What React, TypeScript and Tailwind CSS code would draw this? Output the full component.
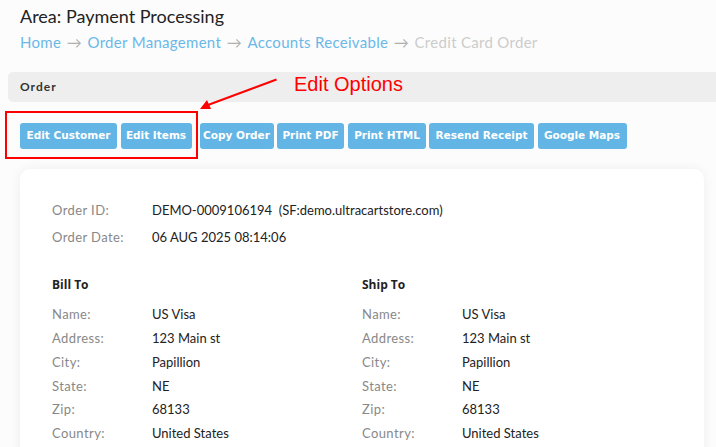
import React from 'react';

const buttons: [string, string][] = [
  ['Edit Customer', 'w-[97px] mr-[3.5px]'],
  ['Edit Items', 'w-[71px] mr-[8px]'],
  ['Copy Order', 'w-[74px] mr-[3.5px]'],
  ['Print PDF', 'w-[67px] mr-[4px]'],
  ['Print HTML', 'w-[78px] mr-[3px]'],
  ['Resend Receipt', 'w-[105px] mr-[3.5px]'],
  ['Google Maps', 'w-[89px]'],
];

const crumbs = ['Home', 'Order Management', 'Accounts Receivable'];

const address = [
  ['Name:', 'US Visa'],
  ['Address:', '123 Main st'],
  ['City:', 'Papillion'],
  ['State:', 'NE'],
  ['Zip:', '68133'],
  ['Country:', 'United States'],
];

function AddressBlock({ title }: { title: string }) {
  return (
    <div className="w-[310px]">
      <div className="mb-[9px] font-['Open_Sans',sans-serif] text-[12px] font-bold leading-[18px] text-[#222]">{title}</div>
      {address.map(([k, v]) => (
        <div key={k} className="flex h-[23.8px] items-center text-[13px]">
          <span className="w-[100px] tracking-[0.4px] text-[#888]">{k}</span>
          <span className="text-[#222]">{v}</span>
        </div>
      ))}
    </div>
  );
}

export default function App() {
  return (
    <div className="relative min-h-screen overflow-hidden bg-[#fcfcfc] font-['Lato',sans-serif]">
      <div className="px-5 pt-[4px]">
        <h1 className="text-[18px] leading-[24px] text-[#222]">Area: Payment Processing</h1>
        <div className="mt-[2px] flex items-center text-[15px] leading-[24px] tracking-[0.3px]">
          {crumbs.map((c) => (
            <span key={c} className="flex items-center">
              <span className="text-[#6ab8e8]">{c}</span>
              <span className="mx-[5.5px] text-[#b0b0b0]">→</span>
            </span>
          ))}
          <span className="text-[#cccccc]">Credit Card Order</span>
        </div>
      </div>

      <div className="ml-2 mt-[18px] flex h-[30px] items-center rounded-l-[5px] bg-[#eeeeee] pl-3">
        <span className="text-[12px] font-bold tracking-[1px] text-[#333]">Order</span>
      </div>

      <div className="mt-[21px] flex pl-5">
        {buttons.map(([b, cls]) => (
          <button
            key={b}
            className={`h-[26px] whitespace-nowrap rounded-[3px] bg-[#63b5e5] font-['DejaVu_Sans',sans-serif] text-[10.5px] font-bold text-white ${cls}`}
          >
            {b}
          </button>
        ))}
      </div>

      <div className="ml-5 mr-3 mt-5 rounded-[10px] bg-white px-8 pb-6 pt-[28px] shadow-[0_0_12px_rgba(0,0,0,0.06)]">
        <div className="flex h-[27px] items-center text-[13px]">
          <span className="w-[100px] tracking-[0.4px] text-[#888]">Order ID:</span>
          <span className="text-[#222]">DEMO-0009106194&nbsp;&nbsp;(SF:demo.ultracartstore.com)</span>
        </div>
        <div className="flex h-[27px] items-center text-[13px]">
          <span className="w-[100px] tracking-[0.4px] text-[#888]">Order Date:</span>
          <span className="text-[#222]">06 AUG 2025 08:14:06</span>
        </div>
        <div className="mt-[25px] flex">
          <AddressBlock title="Bill To" />
          <AddressBlock title="Ship To" />
        </div>
      </div>

      {/* annotation overlay */}
      <div className="absolute left-[5px] top-[111px] h-[48px] w-[193px] border-2 border-[#ff0000]" />
      <svg className="absolute left-0 top-0" width="716" height="447" viewBox="0 0 716 447" fill="none">
        <line x1="276.5" y1="79.5" x2="208" y2="105" stroke="#ff0000" strokeWidth="2" />
        <polygon points="200,109 207,100 211,109" fill="#ff0000" />
      </svg>
      <div className="absolute left-[294px] top-[72px] font-['Liberation_Sans',sans-serif] text-[20px] leading-[24px] text-[#ff0000]">
        Edit Options
      </div>
    </div>
  );
}
